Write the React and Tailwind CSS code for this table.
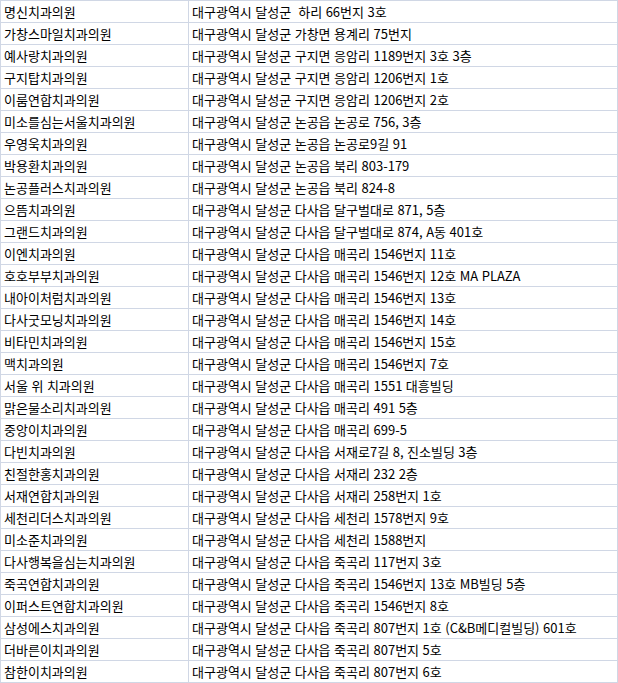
const rows = [
  ['명신치과의원', '대구광역시 달성군  하리 66번지 3호'],
  ['가창스마일치과의원', '대구광역시 달성군 가창면 용계리 75번지'],
  ['예사랑치과의원', '대구광역시 달성군 구지면 응암리 1189번지 3호 3층'],
  ['구지탑치과의원', '대구광역시 달성군 구지면 응암리 1206번지 1호'],
  ['이룸연합치과의원', '대구광역시 달성군 구지면 응암리 1206번지 2호'],
  ['미소를심는서울치과의원', '대구광역시 달성군 논공읍 논공로 756, 3층'],
  ['우영욱치과의원', '대구광역시 달성군 논공읍 논공로9길 91'],
  ['박용환치과의원', '대구광역시 달성군 논공읍 북리 803-179'],
  ['논공플러스치과의원', '대구광역시 달성군 논공읍 북리 824-8'],
  ['으뜸치과의원', '대구광역시 달성군 다사읍 달구벌대로 871, 5층'],
  ['그랜드치과의원', '대구광역시 달성군 다사읍 달구벌대로 874, A동 401호'],
  ['이엔치과의원', '대구광역시 달성군 다사읍 매곡리 1546번지 11호'],
  ['호호부부치과의원', '대구광역시 달성군 다사읍 매곡리 1546번지 12호 MA PLAZA'],
  ['내아이처럼치과의원', '대구광역시 달성군 다사읍 매곡리 1546번지 13호'],
  ['다사굿모닝치과의원', '대구광역시 달성군 다사읍 매곡리 1546번지 14호'],
  ['비타민치과의원', '대구광역시 달성군 다사읍 매곡리 1546번지 15호'],
  ['맥치과의원', '대구광역시 달성군 다사읍 매곡리 1546번지 7호'],
  ['서울 위 치과의원', '대구광역시 달성군 다사읍 매곡리 1551 대흥빌딩'],
  ['맑은물소리치과의원', '대구광역시 달성군 다사읍 매곡리 491 5층'],
  ['중앙이치과의원', '대구광역시 달성군 다사읍 매곡리 699-5'],
  ['다빈치과의원', '대구광역시 달성군 다사읍 서재로7길 8, 진소빌딩 3층'],
  ['친절한홍치과의원', '대구광역시 달성군 다사읍 서재리 232 2층'],
  ['서재연합치과의원', '대구광역시 달성군 다사읍 서재리 258번지 1호'],
  ['세천리더스치과의원', '대구광역시 달성군 다사읍 세천리 1578번지 9호'],
  ['미소준치과의원', '대구광역시 달성군 다사읍 세천리 1588번지'],
  ['다사행복을심는치과의원', '대구광역시 달성군 다사읍 죽곡리 117번지 3호'],
  ['죽곡연합치과의원', '대구광역시 달성군 다사읍 죽곡리 1546번지 13호 MB빌딩 5층'],
  ['이퍼스트연합치과의원', '대구광역시 달성군 다사읍 죽곡리 1546번지 8호'],
  ['삼성에스치과의원', '대구광역시 달성군 다사읍 죽곡리 807번지 1호 (C&B메디컬빌딩) 601호'],
  ['더바른이치과의원', '대구광역시 달성군 다사읍 죽곡리 807번지 5호'],
  ['참한이치과의원', '대구광역시 달성군 다사읍 죽곡리 807번지 6호'],
];

export default function App() {
  return (
    <div className="w-[618px] bg-white text-black font-['Noto_Sans_CJK_KR',sans-serif] text-[13px] [word-spacing:0.6px]">
      <div className="grid grid-cols-[188px_429px] border-l border-t border-[#d0d7e5]">
        {rows.map(([name, addr], i) => (
          <div key={i} className="contents">
            <div className="h-[22px] border-r border-b border-[#d0d7e5] pl-[3px] flex items-center whitespace-pre overflow-hidden">
              {name}
            </div>
            <div className="h-[22px] border-r border-b border-[#d0d7e5] pl-[3px] flex items-center whitespace-pre overflow-hidden">
              {addr}
            </div>
          </div>
        ))}
      </div>
    </div>
  );
}
